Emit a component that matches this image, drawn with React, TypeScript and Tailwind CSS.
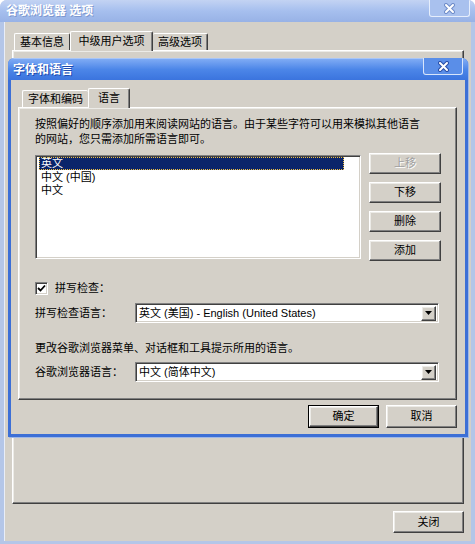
import React from "react";

const raised =
  "border border-t-white border-l-white border-r-[#404040] border-b-[#404040] shadow-[inset_-1px_-1px_0_#808080,inset_1px_1px_0_#ecebe7]";
const sunken =
  "border border-t-[#808080] border-l-[#808080] border-r-white border-b-white shadow-[inset_1px_1px_0_#404040,inset_-1px_-1px_0_#d4d0c8]";

function CloseX({ dark }: { dark?: boolean }) {
  return (
    <svg width="11" height="11" viewBox="0 0 11 11">
      <path d="M2 2 L9 9 M9 2 L2 9" stroke={dark ? "#2a4fa8" : "#6f8cc8"} strokeWidth="4" strokeLinecap="round" />
      <path d="M2 2 L9 9 M9 2 L2 9" stroke="#ffffff" strokeWidth="2" strokeLinecap="round" />
    </svg>
  );
}

function Btn({ label, w, disabled, def }: { label: string; w: string; disabled?: boolean; def?: boolean }) {
  const inner = (
    <div
      className={`${raised} h-full w-full flex items-center justify-center bg-[#d4d0c8] ${
        disabled ? "text-[#a0a0a0] [text-shadow:1px_1px_0_#ffffff]" : "text-black"
      }`}
    >
      {label}
    </div>
  );
  if (def) {
    return <div className={`${w} h-[23px] border border-black`}>{inner}</div>;
  }
  return <div className={`${w} h-[23px]`}>{inner}</div>;
}

function SmallBtn({ label, disabled }: { label: string; disabled?: boolean }) {
  return (
    <div
      className={`${raised} w-[72px] h-[21px] flex items-center justify-center bg-[#d4d0c8] ${
        disabled ? "text-[#a0a0a0] [text-shadow:1px_1px_0_#ffffff]" : "text-black"
      }`}
    >
      {label}
    </div>
  );
}

function Select({ value }: { value: string }) {
  return (
    <div className={`${sunken} w-[304px] h-[20px] bg-white flex items-center justify-between pl-[3px] pr-[2px]`}>
      <span className="whitespace-nowrap leading-none">{value}</span>
      <div className={`${raised} w-[15px] h-[15px] bg-[#d4d0c8] flex items-center justify-center`}>
        <svg width="7" height="4" viewBox="0 0 7 4">
          <path d="M0 0 H7 L3.5 4 Z" fill="#000" />
        </svg>
      </div>
    </div>
  );
}

export default function App() {
  return (
    <div className="w-[475px] h-[544px] relative bg-[#b4c6e8] rounded-t-[7px] overflow-hidden flex flex-col text-[11px] text-black font-['Liberation_Sans','Noto_Sans_CJK_SC',sans-serif]">
      {/* outer title bar (inactive) */}
      <div className="h-[22px] shrink-0 relative bg-gradient-to-b from-[#c3d3f3] via-[#a6bfee] to-[#98b2e6] flex items-center pl-[6px]">
        <span className="font-bold text-white text-[12px] [text-shadow:1px_1px_0_#7d98cf]">谷歌浏览器 选项</span>
        <div className="absolute right-[5px] top-0 w-[41px] h-[17px] rounded-b-[3px] border border-t-0 border-[#e6eefc] bg-[#a9c1ee] flex items-center justify-center">
          <CloseX />
        </div>
      </div>

      {/* outer body */}
      <div className="flex-1 mx-[4px] mb-[3px] bg-[#d4d0c8] flex flex-col px-[7px] pt-[9px] pb-[8px] border-l border-[#e8edf8]">
        {/* outer tabs */}
        <div className="flex items-end pl-[2px] h-[19px] relative z-10">
          <div className="w-[56px] h-[17px] border-t border-l border-white border-r border-r-[#404040] rounded-t-[2px] flex items-center justify-center bg-[#d4d0c8]">
            基本信息
          </div>
          <div className="w-[83px] h-[20px] -mb-px border-t border-l border-white border-r border-r-[#404040] rounded-t-[2px] flex items-center justify-center bg-[#d4d0c8] shadow-[inset_-1px_0_0_#808080]">
            中级用户选项
          </div>
          <div className="w-[55px] h-[17px] border-t border-white border-r border-r-[#404040] rounded-t-[2px] flex items-center justify-center bg-[#d4d0c8] shadow-[inset_-1px_0_0_#808080]">
            高级选项
          </div>
        </div>
        <div className={`${raised} h-[454px] bg-[#d4d0c8]`} />
        <div className="flex justify-end mt-[7px]">
          <div className={`${raised} w-[71px] h-[22px] flex items-center justify-center bg-[#d4d0c8]`}>关闭</div>
        </div>
      </div>

      {/* inner modal dialog */}
      <div className="absolute left-[8px] top-[58px] w-[460px] h-[379px] rounded-t-[6px] overflow-hidden bg-[#3c6fd6] flex flex-col shadow-[1px_1px_0_#9fb8e6]">
        <div className="h-[22px] shrink-0 relative bg-gradient-to-b from-[#7fabf4] via-[#4c86e8] to-[#3b74de] flex items-center pl-[5px] border-t border-[#a9c6f7]">
          <span className="font-bold text-white text-[12px] [text-shadow:1px_1px_0_#1d4bb0]">字体和语言</span>
          <div className="absolute right-[5px] -top-px w-[40px] h-[17px] rounded-b-[3px] border border-t-0 border-[#d8e5fb] bg-[#5a8ee8] flex items-center justify-center">
            <CloseX dark />
          </div>
        </div>
        <div className="flex-1 mx-[3px] mb-[3px] bg-[#d4d0c8] flex flex-col pl-[7px] pr-[8px] pt-[8px] pb-[6px]">
          {/* inner tabs */}
          <div className="flex items-end pl-[4px] h-[19px] relative z-10">
            <div className="w-[66px] h-[17px] border-t border-l border-white rounded-t-[2px] flex items-center justify-center bg-[#d4d0c8]">
              字体和编码
            </div>
            <div className="w-[42px] h-[20px] -mb-px border-t border-l border-white border-r border-r-[#404040] rounded-t-[2px] flex items-center justify-center bg-[#d4d0c8] shadow-[inset_-1px_0_0_#808080]">
              语言
            </div>
          </div>
          <div className={`${raised} h-[293px] bg-[#d4d0c8] pl-[16px] pt-[9px] flex flex-col`}>
            <div className="leading-[15px] whitespace-nowrap">
              按照偏好的顺序添加用来阅读网站的语言。由于某些字符可以用来模拟其他语言
              <br />
              的网站，您只需添加所需语言即可。
            </div>
            <div className="flex items-start mt-[6px] gap-[8px]">
              <div className={`${sunken} mt-[2px] w-[326px] h-[104px] bg-white pt-[1px] pl-[3px]`}>
                <div className="w-[305px] h-[13px] leading-[13px] bg-[#0a246a] text-white pl-[2px] outline outline-1 outline-dotted outline-[#f0c040] -outline-offset-1">
                  英文
                </div>
                <div className="h-[13px] leading-[13px] pl-[2px] mt-px">中文 (中国)</div>
                <div className="h-[13px] leading-[13px] pl-[2px]">中文</div>
              </div>
              <div className="flex flex-col gap-[8px]">
                <SmallBtn label="上移" disabled />
                <SmallBtn label="下移" />
                <SmallBtn label="删除" />
                <SmallBtn label="添加" />
              </div>
            </div>
            <div className="flex items-center mt-[19px] h-[16px]">
              <div className={`${sunken} w-[13px] h-[13px] bg-white flex items-center justify-center`}>
                <svg width="9" height="9" viewBox="0 0 9 9">
                  <path d="M1 4 L3.5 6.5 L8 1.5" stroke="#000" strokeWidth="1.8" fill="none" />
                </svg>
              </div>
              <span className="ml-[7px]">拼写检查：</span>
            </div>
            <div className="flex items-center mt-[7px] h-[20px]">
              <span className="w-[100px]">拼写检查语言：</span>
              <Select value="英文 (美国) - English (United States)" />
            </div>
            <div className="mt-[18px] leading-[15px] whitespace-nowrap">更改谷歌浏览器菜单、对话框和工具提示所用的语言。</div>
            <div className="flex items-center mt-[6px] h-[20px]">
              <span className="w-[100px]">谷歌浏览器语言：</span>
              <Select value="中文 (简体中文)" />
            </div>
          </div>
          <div className="flex justify-end gap-[7px] mt-[5px]">
            <Btn label="确定" w="w-[71px]" def />
            <Btn label="取消" w="w-[71px]" />
          </div>
        </div>
      </div>
    </div>
  );
}
